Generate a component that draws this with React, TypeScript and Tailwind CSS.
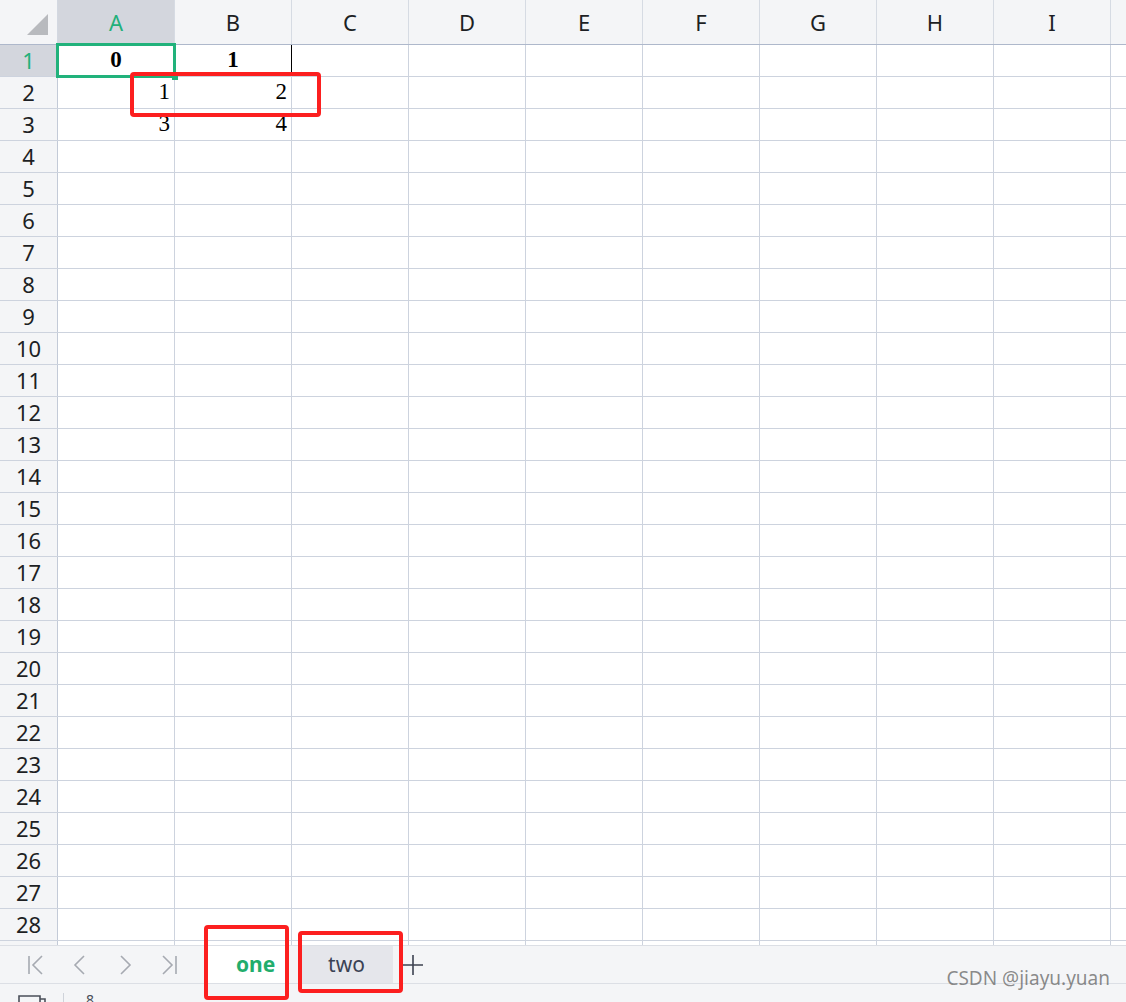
import React from 'react';

const cols = ['A', 'B', 'C', 'D', 'E', 'F', 'G', 'H', 'I', 'J'];
const rows = Array.from({ length: 29 }, (_, i) => i + 1);

const cellData: Record<string, { v: string; bold?: boolean }> = {
  A1: { v: '0', bold: true },
  B1: { v: '1', bold: true },
  A2: { v: '1' },
  B2: { v: '2' },
  A3: { v: '3' },
  B3: { v: '4' },
};

const NavIcon: React.FC<{ d: string }> = ({ d }) => (
  <svg width="22" height="24" viewBox="0 0 22 24" fill="none" stroke="#a6aab1" strokeWidth="1.6">
    <path d={d} />
  </svg>
);

export default function App() {
  return (
    <div
      className="relative w-[1126px] h-[1002px] overflow-hidden bg-white flex flex-col"
      style={{ fontFamily: '"Noto Sans", "Open Sans", sans-serif' }}
    >
      {/* sheet grid */}
      <div className="h-[945px] shrink-0 overflow-hidden">
        {/* column headers */}
        <div className="flex h-[45px] border-b border-[#aeb8cb] bg-[#f4f5f7]">
          <div className="w-[58px] shrink-0 border-r border-[#d3d8e1] flex items-start justify-end pt-[14px] pr-[9px]">
            <svg width="21" height="21" viewBox="0 0 21 21">
              <polygon points="21,0 21,21 0,21" fill="#b8babe" />
            </svg>
          </div>
          {cols.map((c) => (
            <div
              key={c}
              className={`w-[117px] shrink-0 border-r border-[#d6dbe3] flex items-center justify-center text-[22px] ${
                c === 'A' ? 'bg-[#d3d6dd] text-[#22b07a]' : 'text-[#1d1f24]'
              }`}
            >
              {c === 'J' ? '' : c}
            </div>
          ))}
        </div>

        {/* rows */}
        {rows.map((r) => (
          <div key={r} className="flex h-[32px] border-b border-[#cdd3de]">
            <div
              className={`w-[58px] shrink-0 border-r border-[#c3cad7] flex items-center justify-center text-[22px] ${
                r === 1 ? 'bg-[#d3d6dd] text-[#22b07a]' : 'bg-[#f4f5f7] text-[#1d1f24]'
              }`}
            >
              {r < 29 ? r : ''}
            </div>
            {cols.map((c) => {
              const d = cellData[`${c}${r}`];
              return (
                <div
                  key={c}
                  className={`w-[117px] shrink-0 border-r flex items-center text-[23px] text-black ${
                    c === 'B' && r === 1 ? 'border-black' : 'border-[#cdd3de]'
                  } ${d?.bold ? 'justify-center font-bold' : 'justify-end pr-[4px]'}`}
                  style={{ fontFamily: '"Liberation Serif", serif' }}
                >
                  {d?.v}
                </div>
              );
            })}
          </div>
        ))}
      </div>

      {/* sheet tabs bar */}
      <div className="h-[39px] shrink-0 border-t border-b border-[#dcdfe5] bg-[#f4f5f7] flex items-stretch">
        <div className="w-[205px] shrink-0 flex items-center pl-[24px] gap-[23px]">
          <NavIcon d="M5 3 V21 M18 3 L9 12 L18 21" />
          <NavIcon d="M15 3 L6 12 L15 21" />
          <NavIcon d="M7 3 L16 12 L7 21" />
          <NavIcon d="M4 3 L13 12 L4 21 M17 3 V21" />
        </div>
        <div className="w-[84px] shrink-0 bg-white flex items-center pl-[31px] text-[21px] font-bold text-[#22ad6c]">
          one
        </div>
        <div className="w-[93px] shrink-0 ml-[11px] bg-[#e5e6eb] flex items-center justify-center text-[21px] text-[#3b4254]">
          two
        </div>
        <div className="ml-[9px] flex items-center">
          <svg width="22" height="22" viewBox="0 0 22 22" stroke="#3c4250" strokeWidth="1.6">
            <path d="M11 1 V21 M1 11 H21" />
          </svg>
        </div>
      </div>

      {/* status bar */}
      <div className="flex-1 bg-[#f4f5f7] flex items-start">
        <div className="pl-[18px] pt-[11px]">
          <svg width="28" height="14" viewBox="0 0 28 14" fill="none" stroke="#4a4f59" strokeWidth="1.6">
            <path d="M1 14 V1 H22 V14 M22 4 H27 V14" />
          </svg>
        </div>
        <div className="ml-[17px] mt-[9px] w-px h-[12px] bg-[#cfd3da]" />
        <div className="ml-[22px] mt-[9px] text-[14px] text-[#4a4f59] leading-none">8</div>
      </div>

      {/* active cell selection */}
      <div className="absolute left-[56px] top-[43px] w-[120px] h-[35px] border-[3px] border-[#21b27b]" />
      <div className="absolute left-[172px] top-[75px] w-[6px] h-[5px] bg-[#21b27b]" />

      {/* annotations */}
      <div className="absolute left-[130px] top-[72px] w-[191px] h-[45px] border-[4px] border-[#fc1f1f] rounded-[4px]" />
      <div className="absolute left-[204px] top-[925px] w-[85px] h-[75px] border-[4px] border-[#fc1f1f] rounded-[4px]" />
      <div className="absolute left-[298px] top-[931px] w-[105px] h-[62px] border-[4px] border-[#fc1f1f] rounded-[4px]" />

      {/* watermark */}
      <div className="absolute right-[16px] top-[969px] text-[19px] text-[#5a5a5a]/70 leading-none">
        CSDN @jiayu.yuan
      </div>
    </div>
  );
}
